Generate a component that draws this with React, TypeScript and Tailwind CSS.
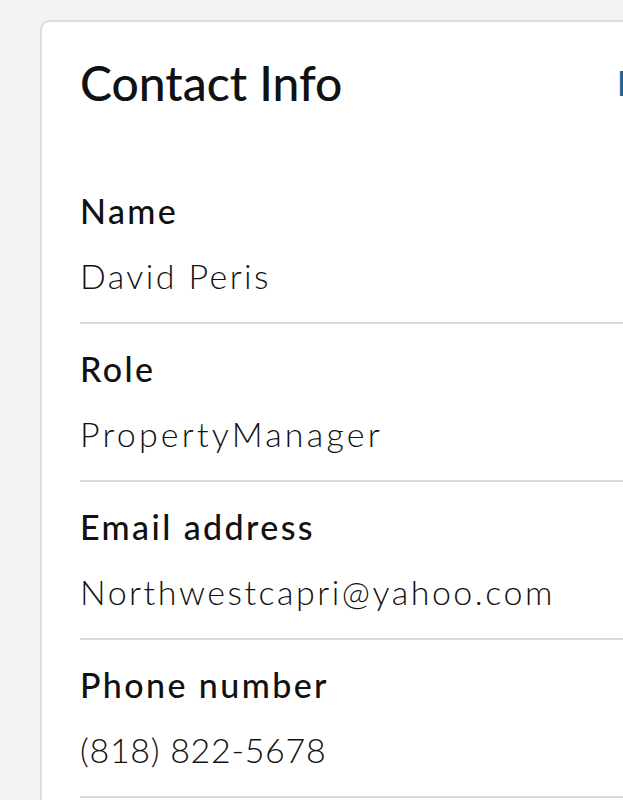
const rows = [
  { label: "Name", value: "David Peris", tracking: "tracking-[2.4px]" },
  { label: "Role", value: "PropertyManager", tracking: "tracking-[3.2px]" },
  { label: "Email address", value: "Northwestcapri@yahoo.com", tracking: "tracking-[2.5px]" },
  { label: "Phone number", value: "(818) 822-5678", tracking: "tracking-[0.7px]" },
];

export default function App() {
  return (
    <div className="h-[800px] w-[623px] overflow-hidden bg-[#f2f2f2] pl-[40px] pt-[20px] font-['Lato',sans-serif] text-[#111]">
      <div className="h-[820px] w-[720px] rounded-[10px] border-2 border-[#dddddd] bg-white pl-[38px] pt-[33px]">
        {/* Header */}
        <div className="grid grid-cols-[537px_auto] items-center">
          <h1 className="text-[48px] font-medium leading-[56px]">Contact Info</h1>
          <button className="text-left text-[34px] font-semibold leading-[40px] text-[#15699a]">Edit</button>
        </div>

        {/* Fields */}
        <div className="mt-[55px]">
          {rows.map((row) => (
            <div key={row.label} className="border-b-2 border-[#d9d9d9] pt-[25px] pb-[26px]">
              <div className="text-[34px] font-medium leading-[40px] tracking-[2.4px]">{row.label}</div>
              <div className={`mt-[25px] text-[34px] font-light leading-[40px] ${row.tracking}`}>{row.value}</div>
            </div>
          ))}
        </div>
      </div>
    </div>
  );
}
